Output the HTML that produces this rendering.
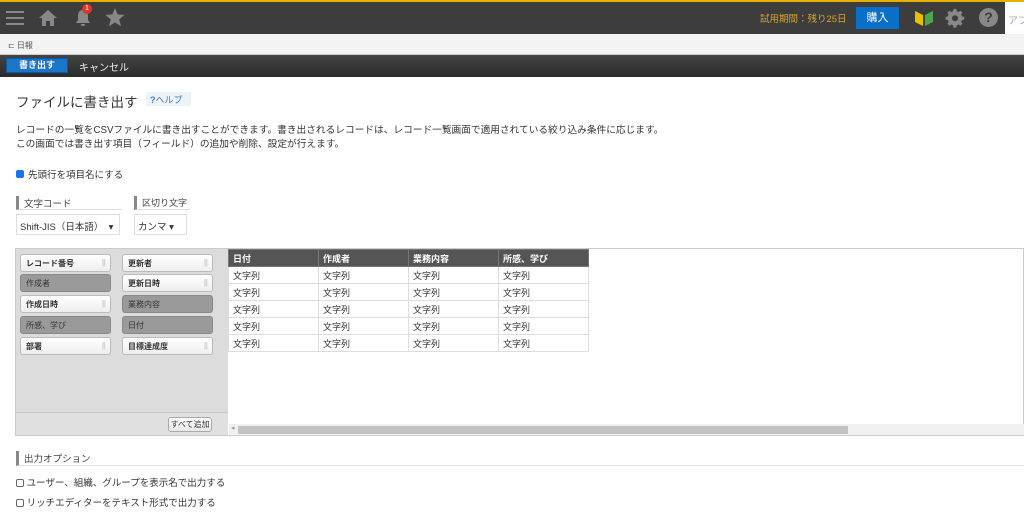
<!DOCTYPE html>
<html><head><meta charset="utf-8"><style>
*{box-sizing:border-box;margin:0;padding:0}
body{width:1024px;height:527px;overflow:hidden;background:#fff;font-family:"Liberation Sans","Noto Sans CJK JP",sans-serif;color:#333;position:relative;font-size:10px}
.a{position:absolute;white-space:nowrap}
.top{left:0;top:0;width:1024px;height:34px;background:#3d3d3d;border-top:2px solid #e8b000}
.bc{left:0;top:34px;width:1024px;height:21px;background:#f3f3f3;border-bottom:1px solid #ccc}
.tb{left:0;top:55px;width:1024px;height:22px;background:linear-gradient(#444,#2b2b2b)}
.item{position:absolute;width:91px;height:18px;border:1px solid #bbb;border-radius:3px;background:linear-gradient(#fff,#eee);font-size:8px;font-weight:bold;padding:3px 5px;color:#333}
.item.g{background:#9a9a9a;border-color:#888;color:#333;font-weight:normal}
.item:after{content:"|||";position:absolute;right:5px;top:3px;color:#ccc;font-weight:normal;letter-spacing:-1px}
.item.g:after{content:""}
table{border-collapse:collapse;font-size:9px}
td,th{width:90px;height:17px;border:1px solid #ddd;text-align:left;padding:0 4px;font-weight:normal}
th{background:#555;color:#fff;font-weight:bold;border-color:#777}
.lbl{border-left:3px solid #888;padding-left:5px;font-size:9.5px;color:#444;border-bottom:1px solid #ddd}
.cb{width:8px;height:8px;border:1px solid #666;border-radius:2px;display:inline-block;vertical-align:-1px}
</style></head><body>
<div class="a top"></div>
<div class="a" style="left:6px;top:11px;width:18px;height:2px;background:#888;box-shadow:0 6px 0 #888,0 12px 0 #888"></div>
<svg class="a" style="left:38px;top:9px" width="20" height="18" viewBox="0 0 20 18"><path d="M10 1L1 9h3v8h4v-5h4v5h4V9h3z" fill="#888"/></svg>
<svg class="a" style="left:74px;top:9px" width="18" height="18" viewBox="0 0 18 18"><path d="M9 1c-4 0-5 3-5 6v4l-2 3h14l-2-3V7c0-3-1-6-5-6zM7 15a2 2 0 004 0z" fill="#888"/></svg>
<div class="a" style="left:82px;top:4px;width:10px;height:10px;border-radius:50%;background:#d9372d;color:#fff;font-size:7px;text-align:center;line-height:10px">1</div>
<svg class="a" style="left:105px;top:8px" width="20" height="19" viewBox="0 0 20 19"><path d="M10 0l2.6 6.5 7 .4-5.4 4.5 1.8 6.8L10 14.4l-6 3.8 1.8-6.8L.4 6.9l7-.4z" fill="#888"/></svg>
<div class="a" style="left:760px;top:11px;font-size:9.5px;color:#d9a42a">試用期間：残り25日</div>
<div class="a" style="left:856px;top:7px;width:43px;height:22px;background:#0a6fc7;color:#fff;font-size:11px;text-align:center;line-height:22px">購入</div>
<svg class="a" style="left:914px;top:9px" width="20" height="18"><path d="M1 2l8 4v11l-8-4z" fill="#e8c000"/><path d="M19 2l-8 4v11l8-4z" fill="#4aa84a"/></svg>
<svg class="a" style="left:945px;top:8px" width="20" height="20" viewBox="0 0 20 20"><path d="M8.5 1h3l.5 2.5 2 1 2.2-1.4 2.1 2.1-1.4 2.2 1 2L20.4 9.9v3l-2.5.5-1 2 1.4 2.2-2.1 2.1-2.2-1.4-2 1-.5 2.5h-3l-.5-2.5-2-1-2.2 1.4-2.1-2.1 1.4-2.2-1-2L-.4 12.9v-3L2 9.4l1-2-1.4-2.2 2.1-2.1 2.2 1.4 2-1z" fill="#888" transform="scale(.9) translate(1 0)"/><circle cx="10" cy="10.3" r="3" fill="#3d3d3d"/></svg>
<div class="a" style="left:979px;top:8px;width:19px;height:19px;border-radius:50%;background:#888;color:#3d3d3d;font-weight:bold;font-size:14px;text-align:center;line-height:19px">?</div>
<div class="a" style="left:1005px;top:2px;width:19px;height:32px;background:#fff;color:#aaa;font-size:10px;padding:10px 0 0 3px;overflow:hidden">アプ</div>
<div class="a bc"></div>
<div class="a" style="left:8px;top:40px;font-size:8px;color:#555">⊏ 日報</div>
<div class="a tb"></div>
<div class="a" style="left:6px;top:58px;width:62px;height:15px;background:#1b75c8;border:1px solid #0c5aa3;color:#fff;font-size:9px;text-align:center;line-height:13px;font-weight:bold">書き出す</div>
<div class="a" style="left:79px;top:59px;color:#eee;font-size:10px">キャンセル</div>
<div class="a" style="left:16px;top:91px;font-size:13.5px;color:#333">ファイルに書き出す</div>
<div class="a" style="left:146px;top:92px;width:45px;height:14px;background:#eef3f8;color:#3a80c8;font-size:9px;padding:1px 4px"><b>?</b>ヘルプ</div>
<div class="a" style="left:16px;top:124px;font-size:9.7px;line-height:14px;color:#333">レコードの一覧をCSVファイルに書き出すことができます。書き出されるレコードは、レコード一覧画面で適用されている絞り込み条件に応じます。<br>この画面では書き出す項目（フィールド）の追加や削除、設定が行えます。</div>
<div class="a" style="left:16px;top:170px;width:8px;height:8px;background:#1a73e8;border-radius:2px"></div>
<div class="a" style="left:28px;top:167px;font-size:9.5px">先頭行を項目名にする</div>
<div class="a lbl" style="left:16px;top:196px;width:106px;height:14px">文字コード</div>
<div class="a lbl" style="left:134px;top:196px;width:56px;height:14px;font-size:9px">区切り文字</div>
<div class="a" style="left:16px;top:214px;width:104px;height:21px;border:1px solid #ddd;font-size:9.5px;padding:4px 3px">Shift-JIS（日本語） &nbsp;▾</div>
<div class="a" style="left:134px;top:214px;width:53px;height:21px;border:1px solid #ddd;font-size:9.5px;padding:4px 3px">カンマ ▾</div>
<div class="a" style="left:15px;top:248px;width:1009px;height:188px;border:1px solid #ccc"></div>
<div class="a" style="left:16px;top:249px;width:212px;height:186px;background:#dcdcdc"></div>
<div class="a" style="left:16px;top:412px;width:212px;height:23px;border-top:1px solid #c8c8c8;background:#e0e0e0"></div>
<div class="a" style="left:168px;top:417px;width:44px;height:15px;border:1px solid #aaa;border-radius:3px;background:linear-gradient(#fff,#e8e8e8);font-size:8px;text-align:center;line-height:13px">すべて追加</div>
<div class="item" style="left:20px;top:254px">レコード番号</div>
<div class="item g" style="left:20px;top:274px">作成者</div>
<div class="item" style="left:20px;top:295px">作成日時</div>
<div class="item g" style="left:20px;top:316px">所感、学び</div>
<div class="item" style="left:20px;top:337px">部署</div>
<div class="item" style="left:122px;top:254px">更新者</div>
<div class="item" style="left:122px;top:274px">更新日時</div>
<div class="item g" style="left:122px;top:295px">業務内容</div>
<div class="item g" style="left:122px;top:316px">日付</div>
<div class="item" style="left:122px;top:337px">目標達成度</div>
<table class="a" style="left:228px;top:249px">
<tr><th>日付</th><th>作成者</th><th>業務内容</th><th>所感、学び</th></tr>
<tr><td>文字列</td><td>文字列</td><td>文字列</td><td>文字列</td></tr>
<tr><td>文字列</td><td>文字列</td><td>文字列</td><td>文字列</td></tr>
<tr><td>文字列</td><td>文字列</td><td>文字列</td><td>文字列</td></tr>
<tr><td>文字列</td><td>文字列</td><td>文字列</td><td>文字列</td></tr>
<tr><td>文字列</td><td>文字列</td><td>文字列</td><td>文字列</td></tr>
</table>
<div class="a" style="left:229px;top:424px;width:795px;height:11px;background:#f0f0f0"></div>
<div class="a" style="left:238px;top:426px;width:610px;height:8px;background:#c2c2c2"></div>
<div class="a" style="left:231px;top:424px;font-size:7px;color:#999">◂</div>
<div class="a lbl" style="left:16px;top:451px;width:1008px;height:15px">出力オプション</div>
<div class="a" style="left:16px;top:475px;font-size:9.5px"><span class="cb"></span> ユーザー、組織、グループを表示名で出力する</div>
<div class="a" style="left:16px;top:495px;font-size:9.5px"><span class="cb"></span> リッチエディターをテキスト形式で出力する</div>
</body></html>
